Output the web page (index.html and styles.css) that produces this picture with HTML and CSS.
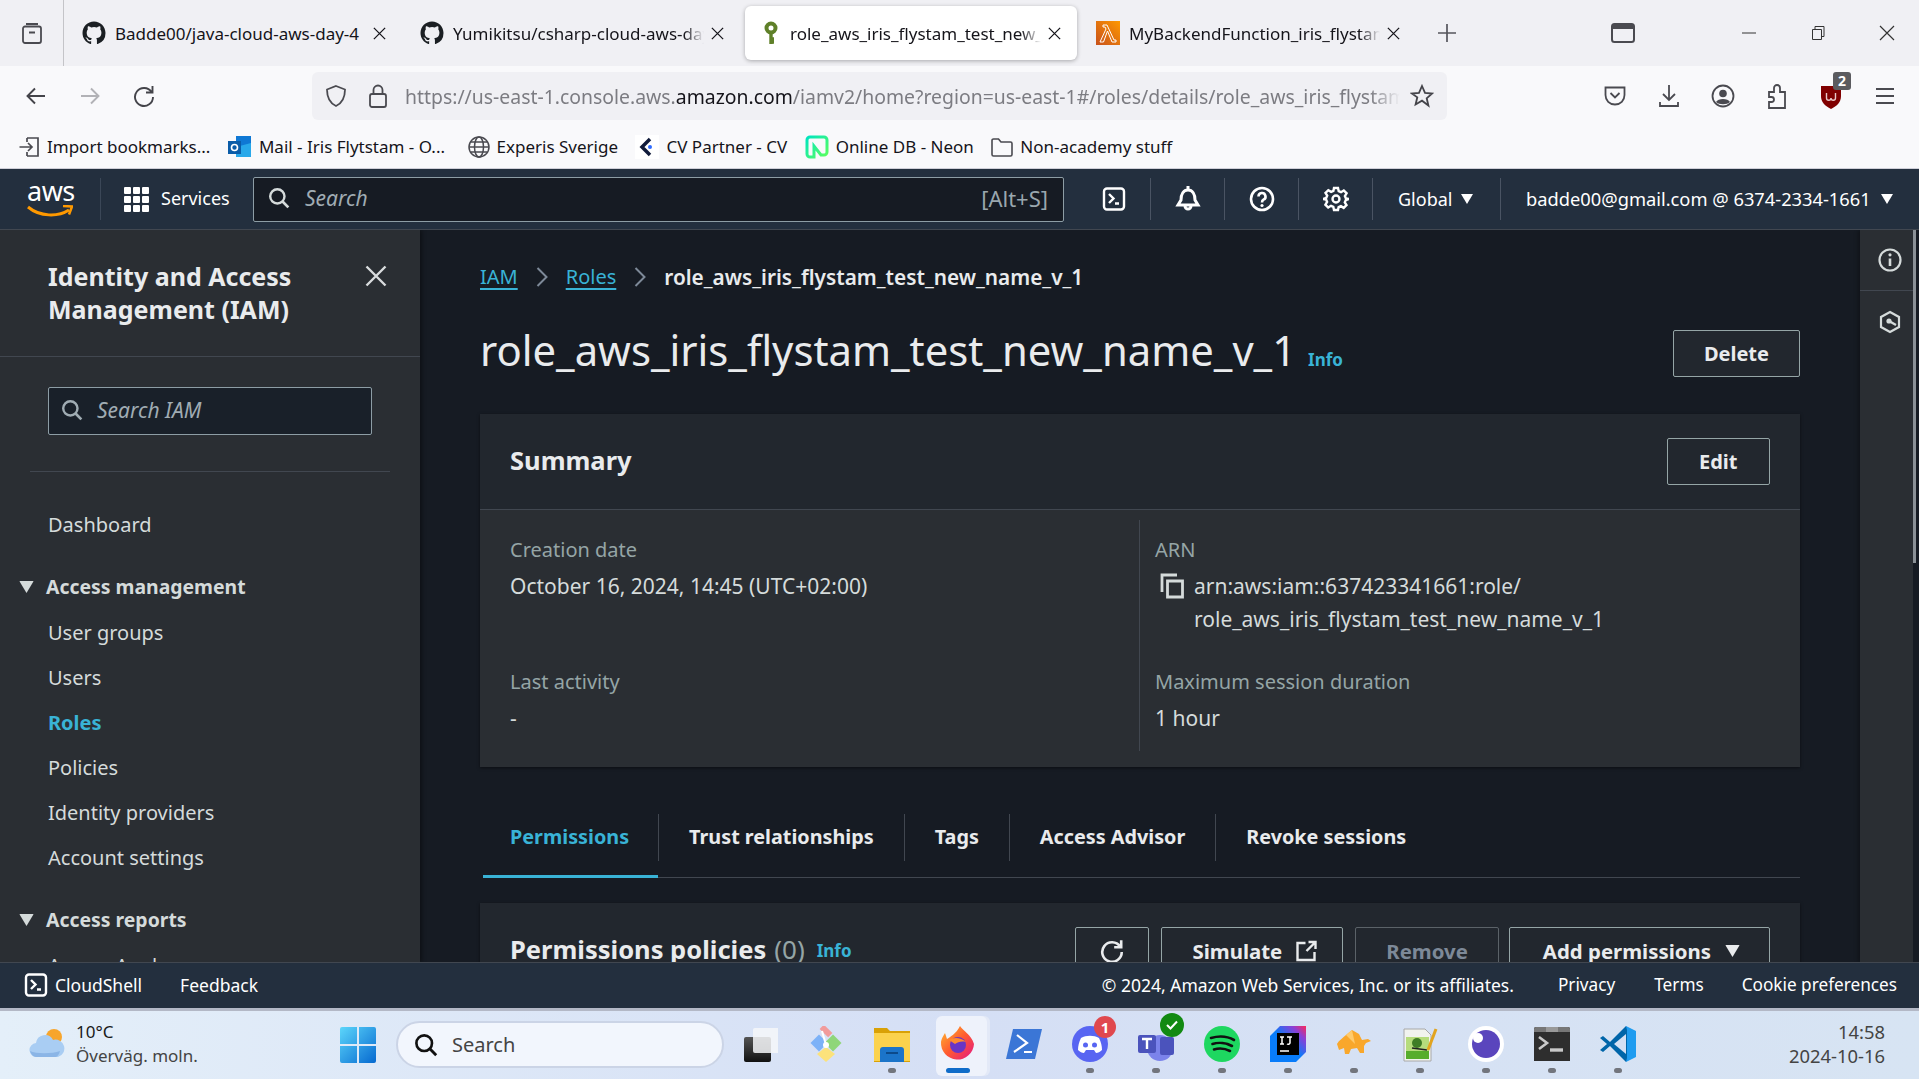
FILE: index.html
```html
<!DOCTYPE html>
<html lang="en">
<head>
<meta charset="utf-8">
<title>role_aws_iris_flystam_test_new_name_v_1</title>
<link rel="stylesheet" href="styles.css">
</head>
<body>
<svg class="defs" width="0" height="0">
  <symbol id="gh" viewBox="0 0 24 24"><path fill="#1b1f23" d="M12 .5C5.65.5.5 5.65.5 12c0 5.09 3.29 9.4 7.86 10.93.58.1.79-.25.79-.55v-2.1c-3.2.7-3.87-1.36-3.87-1.36-.52-1.33-1.28-1.68-1.28-1.68-1.05-.72.08-.7.08-.7 1.16.08 1.77 1.19 1.77 1.19 1.03 1.76 2.7 1.25 3.36.96.1-.75.4-1.25.73-1.54-2.55-.29-5.24-1.28-5.24-5.69 0-1.26.45-2.28 1.19-3.09-.12-.29-.52-1.46.11-3.05 0 0 .97-.31 3.17 1.18a11 11 0 0 1 5.77 0c2.2-1.49 3.17-1.18 3.17-1.18.63 1.59.23 2.76.11 3.05.74.81 1.19 1.83 1.19 3.09 0 4.42-2.69 5.39-5.25 5.68.41.36.78 1.05.78 2.12v3.14c0 .3.21.66.8.55A11.5 11.5 0 0 0 23.5 12C23.5 5.65 18.35.5 12 .5z"/></symbol>
  <symbol id="x" viewBox="0 0 16 16"><path d="M2 2l12 12M14 2L2 14" fill="none" stroke="currentColor" stroke-width="1.400"/></symbol>
  <symbol id="shell" viewBox="0 0 24 24"><rect x="2" y="1.500" width="20" height="21" rx="3" fill="none" stroke="currentColor" stroke-width="2.400"/><path d="M7 7l4.500 4.500L7 16M13 16.500h4" fill="none" stroke="currentColor" stroke-width="2.400"/></symbol>
  <symbol id="mag" viewBox="0 0 20 20"><circle cx="8.500" cy="8.500" r="6.500" fill="none" stroke="currentColor" stroke-width="2.200"/><path d="M13 13l5.500 5.500" stroke="currentColor" stroke-width="2.400"/></symbol>
  <symbol id="tri" viewBox="0 0 12 10"><path d="M0 0h12L6 10z" fill="currentColor"/></symbol>
</svg>
<div class="page">

  <div class="tabbar">
    <div class="win-list">
      <svg width="24" height="24" viewBox="0 0 24 24"><path d="M6 3h12M3 7.500a2 2 0 0 1 2-2h14a2 2 0 0 1 2 2V20a2 2 0 0 1-2 2H5a2 2 0 0 1-2-2zM9 11.500h6" fill="none" stroke="#4a4a50" stroke-width="1.800"/></svg>
    </div>
    <div class="tab">
      <svg class="tab-ico" width="24" height="24"><use href="#gh"/></svg>
      <span class="tab-text">Badde00/java-cloud-aws-day-4</span>
      <svg class="tab-x" width="15" height="15"><use href="#x"/></svg>
    </div>
    <div class="tab">
      <svg class="tab-ico" width="24" height="24"><use href="#gh"/></svg>
      <span class="tab-text fade">Yumikitsu/csharp-cloud-aws-day-4</span>
      <svg class="tab-x" width="15" height="15"><use href="#x"/></svg>
    </div>
    <div class="tab active">
      <svg class="tab-ico" width="24" height="24" viewBox="0 0 24 24"><circle cx="12" cy="7" r="4.500" fill="none" stroke="#5f8029" stroke-width="4"/><path d="M12 11v12M12 18h3M12 21h3" fill="none" stroke="#5f8029" stroke-width="3.400"/></svg>
      <span class="tab-text fade">role_aws_iris_flystam_test_new_name_v_1</span>
      <svg class="tab-x" width="15" height="15"><use href="#x"/></svg>
    </div>
    <div class="tab">
      <svg class="tab-ico" width="24" height="24" viewBox="0 0 24 24"><defs><linearGradient id="lam" x1="0" y1="1" x2="1" y2="0"><stop offset="0" stop-color="#c8511b"/><stop offset="1" stop-color="#f90"/></linearGradient></defs><rect width="24" height="24" fill="url(#lam)"/><path d="M7 4h4l7 15h2v2h-4L11.500 10 7.500 21H4l6-13-1-2H7z" fill="none" stroke="#fff" stroke-width="1"/></svg>
      <span class="tab-text fade">MyBackendFunction_iris_flystam_test</span>
      <svg class="tab-x" width="15" height="15"><use href="#x"/></svg>
    </div>
    <div class="tab-new">
      <svg width="20" height="20" viewBox="0 0 20 20"><path d="M10 1v18M1 10h18" stroke="#55555c" stroke-width="1.700"/></svg>
    </div>
    <div class="pip">
      <svg width="24" height="20" viewBox="0 0 24 20"><rect x="1" y="1" width="22" height="18" rx="2.500" fill="none" stroke="#4a4a50" stroke-width="2"/><path d="M1 3.500a2.500 2.500 0 0 1 2.500-2.500h17A2.500 2.500 0 0 1 23 3.500V6H1z" fill="#4a4a50"/></svg>
    </div>
    <div class="win-ctrl">
      <svg width="16" height="16" viewBox="0 0 16 16"><path d="M1 8h14" stroke="#333" stroke-width="1"/></svg>
      <svg width="16" height="16" viewBox="0 0 16 16"><path d="M2.500 4.500h9v10h-9zM5 4.500V1.500h9v10h-2.500" fill="none" stroke="#333" stroke-width="1"/></svg>
      <svg width="16" height="16" viewBox="0 0 16 16"><path d="M1 1l14 14M15 1L1 15" stroke="#333" stroke-width="1.200"/></svg>
    </div>
  </div>

  <div class="toolbar">
    <div class="tb-btn"><svg width="22" height="22" viewBox="0 0 22 22"><path d="M20 11H3M10 3.500L2.500 11 10 18.500" fill="none" stroke="#44444a" stroke-width="1.900"/></svg></div>
    <div class="tb-btn"><svg width="22" height="22" viewBox="0 0 22 22"><path d="M2 11h17M12 3.500l7.500 7.500-7.500 7.500" fill="none" stroke="#b2b2b6" stroke-width="1.900"/></svg></div>
    <div class="tb-btn"><svg width="24" height="24" viewBox="0 0 24 24"><path d="M19.500 8a9 9 0 1 0 1.500 5M20.500 2v6.500H14" fill="none" stroke="#44444a" stroke-width="1.900"/></svg></div>
    <div class="urlbar">
      <svg class="url-shield" width="24" height="24" viewBox="0 0 24 24"><path d="M12 2l9 3.500c0 8-2.500 13.500-9 16.500C5.500 19 3 13.500 3 5.500z" fill="none" stroke="#4a4a50" stroke-width="1.800"/></svg>
      <svg class="url-lock" width="20" height="24" viewBox="0 0 20 24"><rect x="2" y="10" width="16" height="13" rx="2" fill="none" stroke="#4a4a50" stroke-width="1.800"/><path d="M5.500 10V6a4.500 4.500 0 0 1 9 0v4" fill="none" stroke="#4a4a50" stroke-width="1.800"/></svg>
      <span class="url-text">https://us-east-1.console.aws.<b>amazon.com</b>/iamv2/home?region=us-east-1#/roles/details/role_aws_iris_flystam_test_new_name_v_1</span>
      <svg class="url-star" width="24" height="24" viewBox="0 0 24 24"><path d="M12 2l3 6.800 7.200.7-5.500 4.800 1.700 7.200L12 16.700l-6.400 3.800 1.700-7.200L1.800 9.500 9 8.800z" fill="none" stroke="#44444a" stroke-width="1.800"/></svg>
    </div>
    <div class="tb-right">
      <div class="tb-icon"><svg width="22" height="24" viewBox="0 0 22 24"><path d="M1.500 3.500h19V11c0 5.500-4 9.500-9.500 9.500S1.500 16.500 1.500 11zM6.500 9l4.500 4.500L15.500 9" fill="none" stroke="#4a4a50" stroke-width="1.800"/></svg></div>
      <div class="tb-icon"><svg width="22" height="24" viewBox="0 0 22 24"><path d="M11 1v15M5 10l6 6 6-6M2 18v4h18v-4" fill="none" stroke="#4a4a50" stroke-width="1.800"/></svg></div>
      <div class="tb-icon"><svg width="24" height="24" viewBox="0 0 24 24"><circle cx="12" cy="12" r="10.500" fill="none" stroke="#4a4a50" stroke-width="1.800"/><circle cx="12" cy="9.500" r="3.800" fill="#4a4a50"/><path d="M5 18c2-4 12-4 14 0-3 3-11 3-14 0z" fill="#4a4a50"/></svg></div>
      <div class="tb-icon"><svg width="22" height="26" viewBox="0 0 22 26"><path d="M3 9h5V5a3 3 0 0 1 6 0v4h5v16H3v-6h2.500a2.500 2.500 0 0 0 0-5H3z" fill="none" stroke="#4a4a50" stroke-width="1.800"/></svg></div>
      <div class="tb-icon ublock">
        <svg width="22" height="26" viewBox="0 0 22 26"><path d="M1 3h20v10c0 6-4 10-10 13C5 23 1 19 1 13z" fill="#800000"/><path d="M6.500 10v5a2 2 0 0 0 4.500 0 2 2 0 0 0 4.500 0v-5" fill="none" stroke="#e8c9c9" stroke-width="1.400"/></svg>
        <span class="ub-badge">2</span>
      </div>
      <div class="tb-icon"><svg width="20" height="18" viewBox="0 0 20 18"><path d="M1 2h18M1 9h18M1 16h18" stroke="#4a4a50" stroke-width="1.900"/></svg></div>
    </div>
  </div>

  <div class="bookmarks">
    <div class="bm"><svg width="22" height="22" viewBox="0 0 22 22"><path d="M9 2h11v18H9M9 6V2M9 16v4M1.500 11H14M10 7l4 4-4 4" fill="none" stroke="#4a4a50" stroke-width="1.700"/></svg><span>Import bookmarks...</span></div>
    <div class="bm"><svg width="24" height="24" viewBox="0 0 24 24"><path d="M8 1h15v21H8z" fill="#0f78d4"/><path d="M8 12l15-4v14H8z" fill="#28a8ea"/><path d="M0 6h13v13H0z" fill="#0a5ca8"/><circle cx="6.500" cy="12.500" r="3" fill="none" stroke="#fff" stroke-width="1.600"/></svg><span>Mail - Iris Flytstam - O...</span></div>
    <div class="bm"><svg width="22" height="22" viewBox="0 0 22 22"><circle cx="11" cy="11" r="10" fill="none" stroke="#4a4a50" stroke-width="1.500"/><ellipse cx="11" cy="11" rx="4.500" ry="10" fill="none" stroke="#4a4a50" stroke-width="1.500"/><path d="M1 11h20M2.500 6h17M2.500 16h17" stroke="#4a4a50" stroke-width="1.300"/></svg><span>Experis Sverige</span></div>
    <div class="bm"><svg width="24" height="24" viewBox="0 0 24 24"><rect width="24" height="24" fill="#fff"/><path d="M15 4l-8 8 8 8" fill="none" stroke="#101a3a" stroke-width="3.500"/><circle cx="15" cy="12" r="2" fill="#2f6bff"/></svg><span>CV Partner - CV</span></div>
    <div class="bm"><svg width="24" height="24" viewBox="0 0 24 24"><defs><linearGradient id="neon" x1="0" y1="0" x2="1" y2="1"><stop offset="0" stop-color="#00e5bf"/><stop offset="1" stop-color="#5cff5c"/></linearGradient></defs><path d="M2 5a3 3 0 0 1 3-3h14a3 3 0 0 1 3 3v12a3 3 0 0 1-3 3h-3l-7-9v11H5a3 3 0 0 1-3-3z" fill="none" stroke="url(#neon)" stroke-width="3"/></svg><span>Online DB - Neon</span></div>
    <div class="bm"><svg width="22" height="22" viewBox="0 0 22 22"><path d="M1 4.500A1.500 1.500 0 0 1 2.500 3h5L10 6h9.500A1.500 1.500 0 0 1 21 7.500v11a1.500 1.500 0 0 1-1.500 1.500h-17A1.500 1.500 0 0 1 1 18.500z" fill="none" stroke="#4a4a50" stroke-width="1.600"/></svg><span>Non-academy stuff</span></div>
  </div>

  <nav class="awsnav">
    <div class="aws-logo">
      <span class="aws-word">aws</span>
      <svg width="46" height="14" viewBox="0 0 46 14"><path d="M1 2c12 10 30 10 41 3" fill="none" stroke="#f90" stroke-width="3"/><path d="M36 1l9 .5-3 8" fill="none" stroke="#f90" stroke-width="2.500"/></svg>
    </div>
    <div class="services">
      <div class="grid9"><i></i><i></i><i></i><i></i><i></i><i></i><i></i><i></i><i></i></div>
      <span>Services</span>
    </div>
    <div class="nav-search">
      <svg width="22" height="22"><use href="#mag"/></svg>
      <span class="nav-ph">Search</span>
      <span class="nav-kbd">[Alt+S]</span>
    </div>
    <div class="nav-icon first"><svg width="24" height="24"><use href="#shell"/></svg></div>
    <div class="nav-icon"><svg width="26" height="28" viewBox="0 0 26 28"><path d="M13 1v3M6 15c0-6 2.500-10 7-10s7 4 7 10l3 5H3zM10 21a3 3 0 0 0 6 0" fill="none" stroke="currentColor" stroke-width="3"/></svg></div>
    <div class="nav-icon"><svg width="26" height="26" viewBox="0 0 26 26"><circle cx="13" cy="13" r="11" fill="none" stroke="currentColor" stroke-width="2.600"/><path d="M9.500 10.500a3.500 3.500 0 1 1 5 3.200c-1 .6-1.500 1.300-1.500 2.800" fill="none" stroke="currentColor" stroke-width="2.600"/><circle cx="13" cy="19.500" r="1.600" fill="currentColor"/></svg></div>
    <div class="nav-icon"><svg width="26" height="26" viewBox="0 0 26 26"><circle cx="13" cy="13" r="3.500" fill="none" stroke="currentColor" stroke-width="2.400"/><path d="M11 2h4l.7 3.200 2.300 1 2.800-1.700 2.800 2.800-1.700 2.800 1 2.300L26 13v0l-3.200 1 -1 2.300 1.700 2.800-2.800 2.800-2.800-1.700-2.300 1L15 24h-4l-.7-3.200-2.300-1-2.800 1.700-2.800-2.800 1.700-2.800-1-2.300L0 13v0l3.200-1 1-2.300L2.500 7l2.800-2.800 2.800 1.700 2.300-1z" fill="none" stroke="currentColor" stroke-width="2.400"/></svg></div>
    <div class="nav-drop region"><span>Global</span><svg width="12" height="10"><use href="#tri"/></svg></div>
    <div class="nav-drop user"><span>badde00@gmail.com @ 6374-2334-1661</span><svg width="12" height="10"><use href="#tri"/></svg></div>
  </nav>

  <div class="main">
    <aside class="sidebar">
      <div class="side-head">
        <h2>Identity and Access Management (IAM)</h2>
        <svg class="side-close" width="22" height="22" viewBox="0 0 22 22"><path d="M1.500 1.500l19 19M20.500 1.500l-19 19" stroke="#d9dcde" stroke-width="2.400"/></svg>
      </div>
      <div class="side-search-wrap">
        <div class="side-search">
          <svg width="22" height="22"><use href="#mag"/></svg>
          <span>Search IAM</span>
        </div>
      </div>
      <div class="side-rule"></div>
      <a class="side-item dash">Dashboard</a>
      <div class="side-group"><svg width="15" height="12" viewBox="0 0 12 10"><use href="#tri"/></svg>Access management</div>
      <a class="side-item">User groups</a>
      <a class="side-item">Users</a>
      <a class="side-item current">Roles</a>
      <a class="side-item">Policies</a>
      <a class="side-item">Identity providers</a>
      <a class="side-item">Account settings</a>
      <div class="side-group"><svg width="15" height="12" viewBox="0 0 12 10"><use href="#tri"/></svg>Access reports</div>
      <a class="side-item">Access Analyzer</a>
    </aside>

    <section class="content">
      <div class="crumbs">
        <a>IAM</a>
        <svg width="12" height="22" viewBox="0 0 12 22"><path d="M1.500 2l9 9-9 9" fill="none" stroke="#7d8998" stroke-width="2"/></svg>
        <a>Roles</a>
        <svg width="12" height="22" viewBox="0 0 12 22"><path d="M1.500 2l9 9-9 9" fill="none" stroke="#7d8998" stroke-width="2"/></svg>
        <span>role_aws_iris_flystam_test_new_name_v_1</span>
      </div>
      <div class="title-row">
        <h1>role_aws_iris_flystam_test_new_name_v_1</h1>
        <span class="info">Info</span>
        <button class="btn delete">Delete</button>
      </div>
      <div class="card">
        <div class="card-head">
          <h3>Summary</h3>
          <button class="btn edit">Edit</button>
        </div>
        <div class="card-body">
          <div class="col">
            <div class="label">Creation date</div>
            <div class="value">October 16, 2024, 14:45 (UTC+02:00)</div>
            <div class="label second">Last activity</div>
            <div class="value">-</div>
          </div>
          <div class="col right">
            <div class="label">ARN</div>
            <div class="arn">
              <svg width="26" height="26" viewBox="0 0 26 26"><path d="M2 19V2h15M7.500 8h15v16h-15z" fill="none" stroke="#d5dbdb" stroke-width="2.800"/></svg>
              <div class="value">arn:aws:iam::637423341661:role/<br>role_aws_iris_flystam_test_new_name_v_1</div>
            </div>
            <div class="label second-r">Maximum session duration</div>
            <div class="value">1 hour</div>
          </div>
        </div>
      </div>
      <div class="tabs">
        <a class="ctab on">Permissions</a>
        <a class="ctab">Trust relationships</a>
        <a class="ctab">Tags</a>
        <a class="ctab">Access Advisor</a>
        <a class="ctab last">Revoke sessions</a>
      </div>
      <div class="card perm">
        <div class="perm-title"><h3>Permissions policies</h3><span class="count">(0)</span><span class="info">Info</span></div>
        <div class="perm-actions">
          <button class="btn icon"><svg width="26" height="26" viewBox="0 0 24 24"><path d="M19.500 8a9 9 0 1 0 1.500 5M20.500 2v6.500H14" fill="none" stroke="currentColor" stroke-width="2.400"/></svg></button>
          <button class="btn sim">Simulate<svg width="23" height="22" viewBox="0 0 22 22"><path d="M10 3H2v17h17v-8M13 2h7v7M20 2l-9 9" fill="none" stroke="currentColor" stroke-width="2.400"/></svg></button>
          <button class="btn off">Remove</button>
          <button class="btn add">Add permissions<svg width="15" height="12" viewBox="0 0 12 10"><use href="#tri"/></svg></button>
        </div>
      </div>
    </section>

    <aside class="strip">
      <div class="strip-cell"><svg width="24" height="24" viewBox="0 0 24 24"><circle cx="12" cy="12" r="10.500" fill="none" stroke="#d5dbdb" stroke-width="2.200"/><path d="M12 10.500V18" stroke="#d5dbdb" stroke-width="2.600"/><circle cx="12" cy="6.800" r="1.600" fill="#d5dbdb"/></svg></div>
      <div class="strip-cell"><svg width="24" height="24" viewBox="0 0 24 24"><path d="M12 2l9 5v10l-9 5-9-5V7z" fill="none" stroke="#d5dbdb" stroke-width="2.200"/><circle cx="11" cy="11" r="2.600" fill="#d5dbdb"/><path d="M11 11l7 4" stroke="#d5dbdb" stroke-width="2.200"/></svg></div>
    </aside>
    <div class="scroll"><div class="thumb"></div></div>
  </div>

  <footer class="awsfoot">
    <svg width="24" height="24"><use href="#shell"/></svg>
    <span class="f-cs">CloudShell</span>
    <span class="f-fb">Feedback</span>
    <span class="f-copy">© 2024, Amazon Web Services, Inc. or its affiliates.</span>
    <span class="f-l">Privacy</span>
    <span class="f-l">Terms</span>
    <span class="f-l">Cookie preferences</span>
  </footer>

  <div class="taskbar">
    <div class="weather">
      <svg width="38" height="36" viewBox="0 0 38 36"><circle cx="26" cy="11" r="8" fill="#f7a52c"/><path d="M9 31a7 7 0 0 1-1-14 9 9 0 0 1 17-3 8 8 0 0 1 5 17z" fill="#a9cdf3"/><path d="M2 25c6 3 22 3 30 0-1 4-3 6-5 6H8c-3 0-5-3-6-6z" fill="#8bb5e6"/></svg>
      <div class="w-text"><div>10°C</div><div class="w-sub">Överväg. moln.</div></div>
    </div>
    <svg class="start" width="36" height="36" viewBox="0 0 36 36"><defs><linearGradient id="win" x1="0" y1="0" x2="1" y2="1"><stop offset="0" stop-color="#5cd6fb"/><stop offset="1" stop-color="#0669d0"/></linearGradient></defs><path d="M0 2a2 2 0 0 1 2-2h15v17H0zM19 0h15a2 2 0 0 1 2 2v15H19zM0 19h17v17H2a2 2 0 0 1-2-2zM19 19h17v15a2 2 0 0 1-2 2H19z" fill="url(#win)"/></svg>
    <div class="ts">
      <svg width="24" height="24"><use href="#mag"/></svg>
      <span>Search</span>
    </div>
    <div class="tk first"><svg width="36" height="36" viewBox="0 0 36 36"><defs><linearGradient id="dk" x1="0" y1="0" x2="0" y2="1"><stop offset="0" stop-color="#555"/><stop offset="1" stop-color="#111"/></linearGradient></defs><rect x="2" y="11" width="27" height="25" rx="2" fill="url(#dk)"/><rect x="11" y="2" width="27" height="25" rx="2" fill="#f6f7f9" opacity=".85"/></svg></div>
    <div class="tk"><svg width="36" height="36" viewBox="0 0 36 36"><rect x="5" y="11" width="12" height="12" transform="rotate(45 11 17)" fill="#7db2f8"/><rect x="19" y="11" width="12" height="12" transform="rotate(45 25 17)" fill="#8fd67a"/><rect x="12" y="2" width="12" height="6" transform="rotate(45 18 5)" fill="#f29b9b"/><path d="M18 21l9 7-9 8-9-8z" fill="#fce27b"/><circle cx="18" cy="19" r="3" fill="#fff"/><path d="M14 5l4 14" stroke="#fff" stroke-width="2"/></svg></div>
    <div class="tk"><svg width="36" height="36" viewBox="0 0 36 36"><path d="M0 2h13l3 3h20v31H0z" fill="#d9a106"/><rect y="7" width="36" height="28" fill="#fbd24d"/><path d="M6 36V24a3 3 0 0 1 3-3h18a3 3 0 0 1 3 3v12z" fill="#1b74c9"/><path d="M12 27h12" stroke="#0c4a8a" stroke-width="2"/></svg><i class="dot"></i></div>
    <div class="tk ff"><svg width="36" height="36" viewBox="0 0 36 36"><defs><linearGradient id="ffg" x1="0" y1="0" x2="1" y2="1"><stop offset="0" stop-color="#ffbd2e"/><stop offset=".5" stop-color="#ff5a30"/><stop offset="1" stop-color="#e31587"/></linearGradient></defs><path d="M20 0c3 5 11 8 14 18A16.500 16.500 0 1 1 1 16c1-5 3-7 4-9l2 6c3-2 9-5 13-13z" fill="url(#ffg)"/><circle cx="18" cy="19" r="8" fill="#6a35c4"/><path d="M9 14c4-3 12-3 17 2-5-1-8 0-11 2z" fill="#ff8a2e"/></svg><i class="bar"></i></div>
    <div class="tk"><svg width="36" height="36" viewBox="0 0 36 36"><path d="M7 3h29l-7 30H0z" fill="#3b76d6"/><path d="M11 9l10 8-13 9M18 26h8" fill="none" stroke="#fff" stroke-width="2.200"/></svg></div>
    <div class="tk badged"><svg width="36" height="36" viewBox="0 0 36 36"><circle cx="18" cy="18" r="18" fill="#5865f2"/><path d="M9 12c5-3 13-3 18 0 2 4 3 8 3 12-2 2-4 3-6 3l-2-3H14l-2 3c-2 0-4-1-6-3 0-4 1-8 3-12z" fill="#fff"/><circle cx="13.500" cy="19" r="2.500" fill="#5865f2"/><circle cx="22.500" cy="19" r="2.500" fill="#5865f2"/></svg><span class="badge red">1</span><i class="dot"></i></div>
    <div class="tk badged"><svg width="36" height="36" viewBox="0 0 36 36"><circle cx="22" cy="22" r="13" fill="#7b83eb"/><rect x="22" y="11" width="14" height="18" rx="2" fill="#4b53bc"/><rect y="9" width="18" height="18" rx="2" fill="#4b53bc"/><path d="M4 13h10M9 13v10" stroke="#fff" stroke-width="2.400"/></svg><span class="badge green"><svg width="14" height="14" viewBox="0 0 14 14"><path d="M2 7l3.500 3.500L12 3.500" fill="none" stroke="#fff" stroke-width="2"/></svg></span><i class="dot"></i></div>
    <div class="tk"><svg width="36" height="36" viewBox="0 0 36 36"><circle cx="18" cy="18" r="18" fill="#1ed760"/><path d="M7 12c7-2 16-2 23 2M8.500 18c6-2 14-1 19.500 2M10 23.500c5-1.500 11-1 16 1.500" fill="none" stroke="#111" stroke-width="2.600" stroke-linecap="round"/></svg><i class="dot"></i></div>
    <div class="tk"><svg width="36" height="36" viewBox="0 0 36 36"><defs><linearGradient id="ij" x1="0" y1="1" x2="1" y2="0"><stop offset=".5" stop-color="#087cfa"/><stop offset=".8" stop-color="#8b3fd6"/><stop offset="1" stop-color="#fe2857"/></linearGradient></defs><path d="M10 0h26v26l-10 10H0V10z" fill="url(#ij)"/><rect x="7" y="7" width="22" height="22" fill="#000"/><path d="M10 11h4M12 11v7M10 18h4M17 11h5M20 11v6a2 2 0 0 1-3 1M10 25h9" fill="none" stroke="#fff" stroke-width="1.500"/></svg><i class="dot"></i></div>
    <div class="tk"><svg width="36" height="36" viewBox="0 0 36 36"><path d="M1 18c2-4 6-6 9-9l6-5 7 4 3 6 6-1 3 2-5 2-2 3v7h-4l-3-5-6 1-2 5H9l-1-6-5 2z" fill="#f9a72b"/><path d="M16 4l3 14-9-9" fill="#ffca6b"/></svg><i class="dot"></i></div>
    <div class="tk"><svg width="36" height="36" viewBox="0 0 36 36"><path d="M2 3h21l6 6v26H2z" fill="#f1f3ee" stroke="#a8a8a8"/><rect x="4" y="11" width="23" height="14" fill="#b6dc7c"/><rect x="4" y="25" width="23" height="8" fill="#57ad2c"/><circle cx="15" cy="17" r="5" fill="#3f7d26"/><path d="M10 22l15 2" stroke="#222" stroke-width="1.500"/><path d="M26 24L34 3" stroke="#e2a41f" stroke-width="3"/></svg><i class="dot"></i></div>
    <div class="tk"><svg width="36" height="36" viewBox="0 0 36 36"><circle cx="18" cy="18" r="18" fill="#fff"/><circle cx="18" cy="18" r="14" fill="#5a45bd"/><circle cx="10" cy="12" r="5" fill="#fff"/></svg><i class="dot"></i></div>
    <div class="tk"><svg width="36" height="36" viewBox="0 0 36 36"><rect y="1" width="36" height="27" rx="2" fill="#2e2e2e"/><path d="M2 1h10v5H0V3a2 2 0 0 1 2-2z" fill="#777"/><rect x="12" y="1" width="12" height="5" fill="#999"/><path d="M24 1h10a2 2 0 0 1 2 2v3H24z" fill="#777"/><rect y="6" width="36" height="29" fill="#2e2e2e"/><path d="M5 11l8 6-8 6" fill="none" stroke="#c9c9c9" stroke-width="2.600"/><path d="M16 24h13" stroke="#c9c9c9" stroke-width="3.400"/></svg><i class="dot"></i></div>
    <div class="tk"><svg width="36" height="36" viewBox="0 0 36 36"><path d="M26 0l10 5v26l-10 5z" fill="#1f9cf0"/><path d="M26 0L10 16 3 10l-3 2 7 6-7 6 3 2 7-6 16 16 1-4V4z" fill="#0065a9"/><path d="M26 8L14 18l12 10z" fill="#d4e0f4"/></svg><i class="dot"></i></div>
    <div class="clock"><div>14:58</div><div>2024-10-16</div></div>
  </div>
</div>
</body>
</html>
```
FILE: styles.css
```css
* { box-sizing: border-box; }
html, body { margin: 0; padding: 0; background: #161b23; }
body { font-family: "Noto Sans", "Open Sans", sans-serif; overflow: hidden; }
svg { display: block; flex: none; }
.defs { position: absolute; }
.page { width: 1919px; height: 1079px; display: flex; flex-direction: column; overflow: hidden; }

/* browser tab strip */
.tabbar { height: 66px; background: #f0f0f4; display: flex; align-items: center; color: #15141a; font-size: 17px; flex: none; }
.win-list { width: 64px; height: 66px; border-right: 1px solid #c4c4c8; display: flex; align-items: center; justify-content: center; flex: none; }
.tab { width: 338px; height: 54px; display: flex; align-items: center; padding: 0 0 0 18px; flex: none; }
.tab-ico { margin-right: 9px; }
.tab-text { width: 251px; white-space: nowrap; overflow: hidden; flex: none; }
.tab-text.fade { -webkit-mask-image: linear-gradient(to right, #000 92%, transparent); mask-image: linear-gradient(to right, #000 92%, transparent); }
.tab-x { margin-left: 6px; }
.tab.active { background: #fff; border-radius: 6px; box-shadow: 0 1px 4px rgba(0,0,0,.3); width: 332px; margin: 0 1px 0 5px; padding-left: 14px; }
.tab.active .tab-ico { margin-right: 7px; }
.tab-new { width: 40px; margin-left: 11px; flex: none; display: flex; justify-content: center; }
.pip { margin-left: 144px; flex: none; }
.win-ctrl { margin-left: 106px; display: flex; gap: 53px; flex: none; }

/* toolbar */
.toolbar { height: 54px; background: #f9f9fb; display: flex; align-items: flex-start; padding-top: 6px; padding-left: 9px; flex: none; }
.tb-btn { width: 54px; height: 48px; display: flex; align-items: center; justify-content: center; flex: none; }
.urlbar { margin-left: 141px; width: 1135px; height: 48px; background: #f0f0f4; border-radius: 6px; display: flex; align-items: center; padding-left: 12px; flex: none; }
.url-lock { margin-left: 20px; }
.url-text { margin-left: 17px; width: 995px; white-space: nowrap; overflow: hidden; font-size: 19.4px; color: #7c7c82; flex: none; -webkit-mask-image: linear-gradient(to right, #000 97%, transparent); mask-image: linear-gradient(to right, #000 97%, transparent); }
.url-text b { font-weight: 400; color: #15141a; }
.url-star { margin-left: 10px; }
.tb-right { display: flex; margin-left: 141px; }
.tb-icon { width: 54px; height: 48px; display: flex; align-items: center; justify-content: center; position: relative; flex: none; }
.ub-badge { position: absolute; top: 0; left: 29px; width: 18px; height: 18px; border-radius: 3px; background: #5b5b5f; color: #fff; font-size: 14px; font-weight: 700; line-height: 18px; text-align: center; }

/* bookmarks */
.bookmarks { height: 49px; background: #f9f9fb; border-bottom: 1px solid #cfcfd8; display: flex; align-items: center; padding: 5px 0 0 18px; gap: 17.500px; font-size: 17px; color: #15141a; flex: none; }
.bm { display: flex; align-items: center; gap: 7px; white-space: nowrap; }
.bm:nth-child(3) { margin-left: 5px; }

/* AWS nav */
.awsnav { height: 61px; background: #232f3e; border-bottom: 1px solid #414750; display: flex; align-items: center; color: #fff; font-size: 18px; flex: none; }
.aws-logo { width: 101px; height: 42px; padding-left: 27px; border-right: 1px solid #3b4757; display: flex; flex-direction: column; flex: none; position: relative; }
.aws-word { font-size: 27px; line-height: 26px; font-weight: 400; letter-spacing: -.5px; height: 27px; }
.services { display: flex; align-items: center; margin-left: 23px; width: 129px; gap: 12px; flex: none; }
.services span { margin-bottom: 2px; }
.grid9 { display: grid; grid-template-columns: repeat(3, 7px); grid-auto-rows: 7px; gap: 2px; }
.grid9 i { background: #fff; border-radius: 1px; }
.nav-search { width: 811px; height: 45px; background: #161b23; border: 1px solid #8d9da5; border-radius: 2px; display: flex; align-items: center; padding: 0 15px 2px 14px; color: #d5dbdb; flex: none; }
.nav-ph { margin-left: 15px; font-style: italic; font-size: 21px; color: #a0acb3; flex: 1; }
.nav-kbd { font-size: 22px; color: #9aa7ae; }
.nav-icon { width: 74px; height: 42px; border-right: 1px solid #4a5463; display: flex; align-items: center; justify-content: center; flex: none; }
.nav-icon.first { width: 87px; padding-left: 13px; }
.nav-drop { display: flex; align-items: center; white-space: nowrap; height: 42px; flex: none; padding-bottom: 1px; }
.region { width: 128px; padding-left: 25px; gap: 9px; border-right: 1px solid #4a5463; }
.user { padding-left: 25px; gap: 10px; font-size: 18.3px; }

/* layout */
.main { flex: 1; min-height: 0; display: flex; background: #161b23; overflow: hidden; }

/* sidebar */
.sidebar { width: 420px; background: #2a2e33; box-shadow: 2px 0 4px rgba(0,0,0,.4); flex: none; overflow: hidden; color: #d5dbdb; font-size: 20px; position: relative; }
.side-head { height: 127px; border-bottom: 1px solid #414750; padding: 30px 30px 0 48px; display: flex; justify-content: space-between; }
.side-head h2 { margin: 0; width: 290px; font-size: 25px; line-height: 33px; font-weight: 700; color: #e9ebed; }
.side-close { margin-top: 5px; margin-right: 3px; }
.side-search-wrap { padding: 30px 48px 0; }
.side-search { height: 48px; background: #192029; border: 1px solid #8d9da5; border-radius: 2px; display: flex; align-items: center; padding: 0 12px 2px; gap: 14px; color: #a0acb3; font-style: italic; font-size: 21px; }
.side-rule { margin: 36px 30px 0; border-top: 1px solid #414750; }
.side-item { display: block; height: 45px; line-height: 45px; padding-left: 48px; white-space: nowrap; }
.side-item.dash { margin-top: 30px; }
.side-item.current { color: #39b3d6; font-weight: 700; }
.side-group { height: 45px; margin-top: 18px; padding-bottom: 2px; display: flex; align-items: center; gap: 12px; padding-left: 19px; font-weight: 700; font-size: 19.4px; white-space: nowrap; }

/* content */
.content { flex: 1; min-width: 0; padding: 0 60px; overflow: hidden; color: #d5dbdb; font-size: 21px; }
.crumbs { margin-top: 33px; height: 28px; display: flex; align-items: center; gap: 18px; line-height: 28px; }
.crumbs a { color: #39b3d6; text-decoration: underline; text-underline-offset: 4px; font-size: 20px; }
.crumbs span { color: #e9ebed; font-weight: 600; font-size: 20.8px; }
.title-row { margin-top: 39px; height: 47px; display: flex; align-items: center; margin-bottom: 37px; }
.title-row h1 { margin: 0 0 8px; font-size: 41.8px; font-weight: 400; color: #e9ebed; white-space: nowrap; line-height: 47px; }
.info { color: #39b3d6; font-size: 17px; font-weight: 700; margin-left: 14px; align-self: flex-end; margin-bottom: 6px; }
.title-row .info { margin-left: 12px; }
.btn { height: 47px; padding: 0 30px; background: #22272e; border: 1px solid #95a5a6; border-radius: 2px; color: #e9ebed; font: 700 20.4px "Noto Sans", sans-serif; display: flex; align-items: center; gap: 13px; flex: none; }
.delete { margin-left: auto; font-size: 20px; }
.edit { padding: 0 31.5px; font-size: 20px; }
.sim { padding-right: 24px; }
.add { padding-left: 33px; gap: 14px; padding-right: 29px; }
.card { background: #2a2e33; box-shadow: 0 1px 3px rgba(0,0,0,.5); }
.card-head { height: 96px; background: #22272e; border-bottom: 1px solid #414750; display: flex; align-items: center; justify-content: space-between; padding: 0 30px; }
.card-head h3, .perm-title h3 { margin: 0 0 4px; font-size: 25.5px; font-weight: 700; color: #e9ebed; }
.card-body { height: 257px; padding: 10px 0 16px; display: grid; grid-template-columns: 659px 1fr; }
.col { padding: 12px 0 0 30px; line-height: 36px; white-space: nowrap; }
.col.right { border-left: 1px solid #414750; padding-left: 15px; }
.label { color: #95a5a6; height: 38px; font-size: 20px; }
.value { color: #d5dbdb; line-height: 33px; }
.label.second { margin-top: 61px; }
.arn { display: flex; gap: 8px; padding-left: 5px; height: 66px; }
.arn svg { margin-top: 3px; }
.label.second-r { margin-top: 28px; }
.tabs { margin-top: 33px; margin-left: 3px; height: 78px; border-bottom: 1px solid #414750; display: flex; align-items: flex-start; color: #e9ebed; font-weight: 700; font-size: 19.8px; }
.ctab { height: 47px; line-height: 45px; margin-top: 14px; padding: 0 30px; border-right: 1px solid #414750; white-space: nowrap; }
.ctab.on { color: #39b3d6; position: relative; padding: 0 29px 0 27px; }
.ctab.on::after { content: ""; position: absolute; left: 0; right: 0; bottom: -17px; height: 3px; background: #39b3d6; }
.ctab.last { border-right: 0; }
.perm { margin-top: 25px; height: 300px; background: #22272e; display: flex; justify-content: space-between; padding: 24px 30px 0; }
.perm-title { display: flex; align-items: center; height: 47px; gap: 7px; }
.perm-title .count { font-size: 26px; color: #95a5a6; margin: 0 0 3px 1px; }
.perm-title .info { align-self: center; margin: 0 0 0 5px; }
.perm-actions { display: flex; gap: 12px; }
.perm-actions .off { margin-right: -2px; }
.btn.icon { padding: 0 23px; }
.btn.off { color: #7d8998; border-color: #5b6268; }

/* right rail */
.strip { width: 53px; background: #2a2e33; flex: none; box-shadow: -2px 0 4px rgba(0,0,0,.3); }
.strip-cell { height: 61px; display: flex; align-items: center; justify-content: center; border-bottom: 1px solid #414750; padding-left: 7px; }
.strip-cell:last-child { border-bottom: 0; }
.scroll { width: 6px; background: #161b23; flex: none; }
.thumb { width: 3px; height: 333px; background: #8b9197; }

/* AWS footer */
.awsfoot { height: 46px; background: #232f3e; border-top: 1px solid #414750; display: flex; align-items: center; padding: 0 0 2px 24px; color: #fff; font-size: 17.5px; white-space: nowrap; flex: none; }
.f-cs { margin-left: 7px; }
.f-fb { margin-left: 38px; }
.f-copy { margin-left: auto; margin-right: 44px; }
.f-l { margin-right: 37px; font-size: 17.2px; }
.f-l:nth-last-child(2) { margin-right: 38px; }
.f-l:nth-last-child(3) { margin-right: 39px; }
.f-l:last-child { margin-right: 22px; }

/* taskbar */
.taskbar { height: 71px; flex: none; background: linear-gradient(90deg, #e4eff9, #d5dff5 50%, #d7e4f3); border-top: 3px solid #b3b8c6; display: flex; align-items: flex-start; color: #1a1a1a; position: relative; }
.weather { width: 340px; height: 68px; display: flex; align-items: center; padding: 0 0 2px 28px; gap: 10px; flex: none; }
.w-text { font-size: 17px; line-height: 24px; }
.w-sub { color: #444; }
.start { margin-top: 16px; }
.ts { margin: 10px 3px 0 20px; width: 328px; height: 47px; background: #f2f6fd; border: 2px solid #cbd4e6; border-radius: 24px; display: flex; align-items: center; padding-left: 16px; gap: 14px; font-size: 20px; color: #444; flex: none; }
.ts svg { color: #111; }
.tk { width: 66px; height: 68px; padding-top: 15px; display: flex; flex-direction: column; align-items: center; position: relative; flex: none; }
.dot { width: 8px; height: 5px; margin-top: 6px; background: #72757d; border-radius: 3px; }
.ff::before { content: ""; position: absolute; left: 11px; top: 5px; width: 51px; height: 60px; background: #eef2fb; border-radius: 6px; box-shadow: 3px 0 0 #e3e9f7; }
.ff svg { position: relative; }
.bar { width: 24px; height: 5px; margin-top: 6px; background: #0f6cc9; border-radius: 3px; position: relative; }
.badge { position: absolute; top: 5px; left: 37px; width: 22px; height: 22px; border-radius: 50%; color: #fff; font-size: 15px; font-weight: 700; display: flex; align-items: center; justify-content: center; }
.badge.red { background: #e0484e; }
.badge.green { background: #128a12; width: 24px; height: 24px; top: 2px; }
.clock { margin-left: auto; padding-right: 34px; padding-top: 9px; text-align: right; font-size: 18.4px; line-height: 24px; color: #444; }
```
